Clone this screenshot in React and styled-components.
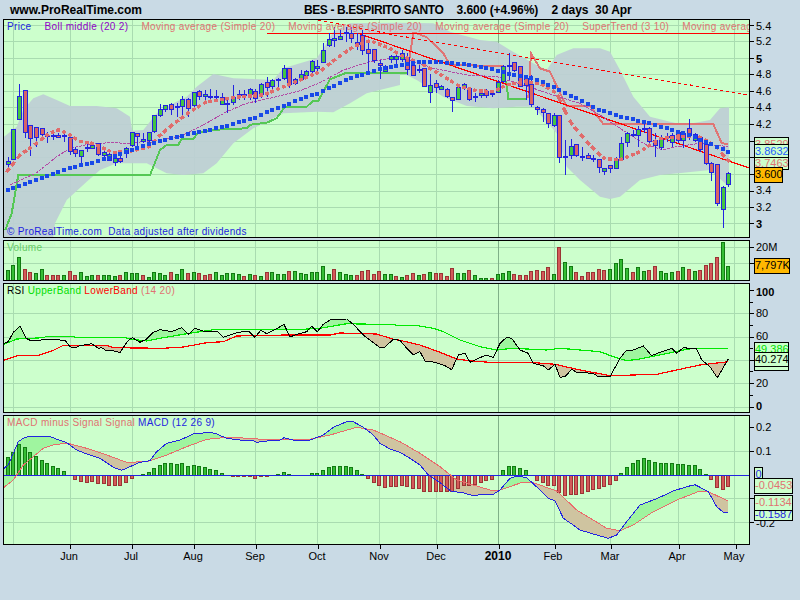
import React from 'react';
import styled, { createGlobalStyle } from 'styled-components';

const GlobalStyle = createGlobalStyle`
  html, body {
    margin: 0;
    padding: 0;
    background: #c9dae5;
  }
`;

const Page = styled.div`
  width: 800px;
  height: 600px;
  overflow: hidden;
  display: flex;
  flex-direction: column;
  gap: 2px;
  background: #c9dae5;
  font-family: 'Liberation Sans', Arial, sans-serif;
  color: #000;
`;
const TitleBar = styled.div`
  height: 17px;
  box-sizing: border-box;
  padding: 3px 0 0 10px;
  display: flex;
  align-items: center;
  font-size: 12px;
  font-weight: bold;
  white-space: pre;
`;
const SiteName = styled.span`
  width: 294px;
`;
const Security = styled.span`
  letter-spacing: -0.4px;
`;
const Quote = styled.span`
  letter-spacing: -0.05px;
`;
const Pane = styled.div`
  display: flex;
  height: ${({ $h }) => $h}px;
  margin-left: 3px;
`;
const ChartBox = styled.div`
  position: relative;
  width: 747px;
  height: 100%;
  box-sizing: border-box;
  border: 1px solid #000;
  background: #ccffcc;
  overflow: hidden;
  flex: none;
`;
const ChartSvg = styled.svg`
  display: block;
`;
const Legend = styled.div`
  position: absolute;
  top: 1px;
  left: 3px;
  display: flex;
  gap: ${({ $gap }) => $gap || 0}px;
  font-size: 10px;
  letter-spacing: 0.34px;
  line-height: 12px;
  white-space: pre;
`;
const LegendItem = styled.span`
  color: ${({ $c }) => $c};
`;
const Copyright = styled.div`
  position: absolute;
  left: 3px;
  bottom: -1px;
  color: #1c1ce0;
  font-size: 10px;
  letter-spacing: 0.31px;
  line-height: 13px;
  white-space: pre;
`;
const Axis = styled.div`
  position: relative;
  flex: 1;
`;
const AxisLabel = styled.span`
  position: absolute;
  left: 6px;
  transform: translateY(-50%);
  font-size: 11px;
  line-height: 12px;
  font-weight: ${({ $bold }) => ($bold ? 'bold' : 'normal')};
`;
const AxisTick = styled.i`
  position: absolute;
  left: 0;
  width: ${({ $minor }) => ($minor ? 3 : 4)}px;
  height: 1px;
  background: #000;
`;
const Tag = styled.div`
  position: absolute;
  left: 4px;
  width: ${({ $w }) => $w}px;
  height: ${({ $h }) => $h || 14}px;
  top: ${({ $top }) => $top}px;
  box-sizing: border-box;
  border: 1px solid #000;
  background: ${({ $bg }) => $bg || '#ccffcc'};
  color: ${({ $c }) => $c || '#000'};
  font-size: 11px;
  line-height: 13px;
  text-align: center;
  white-space: pre;
  overflow: hidden;
`;
const Months = styled.div`
  position: relative;
  height: 30px;
  margin-top: -2px;
`;
const MonthTick = styled.i`
  position: absolute;
  top: 0;
  width: 1px;
  height: 4px;
  background: #000;
`;
const MonthLabel = styled.span`
  position: absolute;
  top: 4px;
  transform: translateX(-50%);
  font-size: ${({ $bold }) => ($bold ? 12 : 11)}px;
  line-height: 14px;
  font-weight: ${({ $bold }) => ($bold ? 'bold' : 'normal')};
`;

// all chart data read off the 3x crops: half(pageX, pageY, [zoomX, zoomY, ...])
const half = (ox, oy, a) => {
  const out = [];
  for (let i = 0; i < a.length; i += 2) out.push([ox + a[i] / 3, oy + a[i + 1] / 3]);
  return out;
};
const toPoints = (p) => p.map(([x, y]) => `${x.toFixed(1)},${y.toFixed(1)}`).join(' ');

const interp = (pts, x) => {
  for (let i = 1; i < pts.length; i++) {
    if (x <= pts[i][0]) {
      const [x0, y0] = pts[i - 1];
      const [x1, y1] = pts[i];
      if (x1 === x0) return y1;
      return y0 + ((y1 - y0) * (x - x0)) / (x1 - x0);
    }
  }
  return pts[pts.length - 1][1];
};

// polygons of the stretches where line a lies above (sign -1) or below (sign 1) line b
const fillBetween = (a, b, sign) => {
  const from = Math.ceil(Math.max(a[0][0], b[0][0]));
  const to = Math.floor(Math.min(a[a.length - 1][0], b[b.length - 1][0]));
  const polys = [];
  let top = [];
  let bot = [];
  const flush = () => {
    if (top.length > 1) polys.push(toPoints([...top, ...bot.reverse()]));
    top = [];
    bot = [];
  };
  for (let x = from; x <= to; x++) {
    const ya = interp(a, x);
    const yb = interp(b, x);
    if ((ya - yb) * sign > 0) {
      top.push([x, ya]);
      bot.push([x, yb]);
    } else flush();
  }
  flush();
  return polys;
};

const vGrid = [13.5, 70.5, 132.5, 194.5, 255.5, 317.5, 379.5, 436.5, 554.5, 610.5, 678.5, 734.5];
const yearLine = 498.5;

const GREEN_FILL = '#9ff59f';
const BROWN_FILL = '#cfc4a0';
const GRID = '#a9dcb0';

/* price panel */
const priceGrid = [25, 41, 58, 74, 91, 107, 124, 141, 157, 174, 191, 207, 223];
const bandUpper = [
  ...half(0, 0, [12, 410, 50, 380, 70, 330, 100, 295, 130, 283, 170, 300, 210, 318, 290, 318, 350, 325, 390, 350, 397, 392, 430, 390, 470, 340, 520, 310, 560, 290, 590, 260, 640, 222, 700, 235, 760, 237, 820, 240, 850, 205, 950, 175, 980, 130, 1000, 95, 1050, 70, 1200, 68]),
  ...half(400, 0, [0, 68, 100, 70, 150, 95, 240, 120, 290, 125, 330, 150, 400, 190, 440, 210, 470, 165, 520, 145, 600, 145, 630, 155, 660, 210, 700, 290, 750, 350, 850, 375, 930, 360, 960, 325, 987, 322]),
];
const bandLower = [
  ...half(0, 0, [12, 712, 160, 712, 165, 670, 200, 600, 260, 545, 300, 510, 350, 490, 440, 490, 500, 520, 550, 525, 610, 520, 650, 490, 700, 430, 760, 385, 800, 365, 850, 340, 950, 335, 1000, 337, 1050, 310, 1100, 280, 1200, 255]),
  ...half(400, 0, [0, 215, 50, 240, 130, 290, 200, 318, 280, 325, 350, 320, 400, 320, 470, 400, 500, 500, 540, 540, 600, 590, 630, 597, 660, 590, 720, 540, 780, 525, 850, 518, 930, 510, 987, 560]),
];
const bollMiddle = [
  ...half(0, 0, [15, 572, 120, 535, 200, 507, 300, 482, 380, 455, 450, 432, 520, 412, 590, 398, 680, 378, 760, 355, 830, 325, 900, 298, 960, 278, 1040, 240, 1120, 212, 1200, 197]),
  ...half(400, 0, [60, 185, 130, 187, 200, 193, 260, 203, 320, 220, 400, 235, 470, 265, 540, 300, 600, 330, 660, 350, 730, 365, 800, 385, 870, 405, 930, 432, 985, 455]),
];
const maThick = [
  ...half(0, 0, [18, 518, 60, 465, 110, 430, 140, 405, 175, 388, 205, 402, 240, 425, 280, 430, 310, 445, 340, 458, 400, 452, 450, 440, 470, 415, 520, 372, 570, 335, 620, 305, 670, 298, 720, 290, 790, 285, 840, 265, 900, 240, 960, 215, 1010, 175, 1060, 140, 1110, 122, 1170, 145, 1200, 165]),
  ...half(400, 0, [50, 185, 90, 205, 140, 235, 180, 260, 230, 272, 280, 275, 320, 255, 370, 245, 420, 250, 470, 280, 510, 365, 560, 425, 610, 475, 660, 480, 720, 455, 780, 415, 850, 410, 900, 410, 950, 440, 985, 485]),
];
const maThin = [
  ...half(0, 0, [30, 555, 110, 518, 170, 470, 210, 445, 270, 432, 330, 428, 390, 430, 470, 420, 540, 410, 610, 375, 680, 335, 740, 310, 830, 290, 900, 272, 960, 248, 1030, 210, 1110, 185, 1200, 170]),
  ...half(400, 0, [100, 205, 200, 225, 290, 230, 400, 265, 490, 295, 540, 310, 600, 345, 660, 385, 730, 430, 790, 450, 830, 440, 900, 430, 985, 440]),
];
const trendUp = [
  ...half(0, 0, [16, 690, 35, 640, 55, 525, 450, 525, 480, 450, 500, 435, 535, 435, 545, 416, 580, 416, 595, 398, 630, 390, 740, 385, 750, 374, 800, 368, 830, 355, 855, 320, 920, 320, 940, 302, 955, 302, 990, 238, 1040, 218, 1200, 218]),
  ...half(400, 0, [20, 218]),
];
const trendUp2 = half(400, 0, [305, 200, 320, 255, 325, 296, 380, 296]);
const trendDown = half(400, 0, [27, 185, 40, 100, 50, 100, 80, 112, 130, 160, 150, 195, 310, 198]);
const trendDown2 = half(400, 0, [385, 295, 393, 160, 420, 205, 450, 215, 490, 300, 500, 318, 570, 318, 610, 372, 940, 372, 965, 430, 985, 432]);

// x, body top, body bottom, high, low, colour (zoomed coordinates)
const candlesLeft = [
  [24, 484, 492, 470, 500, 'g'], [39, 388, 478, 388, 480, 'g'], [57, 289, 358, 252, 360, 'g'], [75, 271, 397, 271, 415, 'r'],
  [90, 376, 415, 376, 467, 'r'], [108, 381, 412, 381, 440, 'r'], [126, 385, 404, 385, 415, 'r'], [141, 404, 406, 395, 428, 'g'],
  [158, 405, 408, 395, 420, 'g'], [174, 405, 412, 400, 415, 'r'], [192, 405, 407, 395, 425, 'g'], [210, 411, 452, 400, 465, 'r'],
  [225, 446, 458, 440, 470, 'r'], [243, 451, 470, 450, 490, 'g'], [261, 440, 444, 430, 455, 'g'], [276, 434, 442, 425, 445, 'g'],
  [294, 430, 464, 428, 468, 'r'], [312, 457, 467, 445, 480, 'g'], [327, 462, 480, 448, 482, 'g'], [345, 473, 484, 460, 497, 'g'],
  [360, 475, 484, 460, 490, 'r'], [378, 443, 458, 440, 475, 'g'], [396, 397, 436, 397, 440, 'g'], [411, 400, 410, 398, 440, 'r'],
  [429, 418, 423, 400, 430, 'g'], [447, 397, 422, 397, 440, 'g'], [462, 346, 394, 346, 400, 'g'], [480, 328, 346, 312, 352, 'g'],
  [495, 316, 328, 316, 335, 'g'], [513, 313, 328, 310, 345, 'r'], [531, 318, 320, 310, 350, 'g'], [546, 298, 319, 288, 350, 'g'],
  [564, 298, 325, 295, 350, 'r'], [582, 277, 316, 275, 325, 'g'], [597, 274, 288, 270, 300, 'r'], [615, 283, 289, 270, 300, 'g'],
  [630, 288, 291, 268, 310, 'g'], [648, 287, 289, 270, 300, 'g'], [666, 292, 314, 280, 315, 'g'], [681, 308, 312, 290, 340, 'g'],
  [699, 290, 305, 255, 315, 'g'], [717, 282, 285, 270, 300, 'g'], [732, 282, 285, 270, 300, 'g'], [750, 268, 284, 265, 300, 'g'],
  [765, 272, 293, 268, 310, 'r'], [783, 252, 283, 250, 295, 'g'], [801, 247, 262, 232, 290, 'r'], [816, 241, 260, 238, 270, 'g'],
  [834, 236, 240, 235, 265, 'g'], [852, 205, 235, 195, 240, 'g'], [867, 205, 252, 205, 265, 'r'], [885, 238, 250, 235, 255, 'g'],
  [903, 222, 236, 210, 240, 'g'], [918, 214, 226, 210, 235, 'g'], [936, 184, 215, 180, 225, 'g'], [951, 199, 205, 180, 215, 'g'],
  [969, 151, 188, 130, 190, 'g'], [987, 118, 136, 100, 140, 'g'], [1002, 115, 121, 80, 140, 'g'], [1020, 107, 116, 90, 120, 'g'],
  [1038, 96, 99, 80, 125, 'g'], [1053, 100, 114, 80, 130, 'r'], [1071, 125, 131, 100, 150, 'r'], [1086, 104, 150, 90, 165, 'r'],
  [1104, 148, 160, 130, 220, 'r'], [1122, 148, 180, 148, 190, 'r'], [1139, 190, 196, 180, 238, 'r'], [1156, 197, 213, 195, 215, 'g'],
  [1173, 168, 177, 165, 190, 'g'], [1188, 168, 178, 160, 200, 'g'],
];
const candlesRight = [
  [6, 160, 177, 150, 185, 'g'], [21, 170, 205, 160, 225, 'r'], [39, 195, 224, 185, 228, 'r'], [57, 208, 212, 195, 220, 'g'],
  [72, 205, 260, 205, 262, 'r'], [90, 255, 275, 222, 308, 'g'], [108, 250, 262, 240, 280, 'r'], [123, 258, 266, 255, 270, 'g'],
  [141, 268, 290, 265, 295, 'r'], [156, 292, 302, 290, 335, 'r'], [174, 262, 298, 258, 298, 'g'], [192, 253, 263, 250, 270, 'g'],
  [207, 265, 298, 262, 302, 'r'], [225, 288, 292, 280, 305, 'g'], [243, 280, 287, 270, 295, 'g'], [258, 272, 284, 268, 295, 'r'],
  [276, 278, 280, 270, 290, 'g'], [294, 246, 275, 240, 280, 'g'], [309, 198, 242, 195, 250, 'g'], [327, 195, 199, 158, 240, 'g'],
  [342, 187, 212, 185, 215, 'r'], [360, 198, 258, 198, 260, 'r'], [378, 235, 256, 225, 300, 'r'], [393, 253, 312, 225, 322, 'r'],
  [411, 322, 328, 318, 345, 'r'], [429, 328, 338, 325, 365, 'r'], [444, 338, 368, 338, 385, 'r'], [462, 345, 376, 340, 380, 'g'],
  [477, 345, 470, 345, 488, 'r'], [495, 468, 471, 420, 525, 'g'], [513, 438, 465, 418, 478, 'g'], [528, 433, 466, 433, 470, 'r'],
  [546, 467, 470, 440, 482, 'g'], [564, 465, 473, 460, 478, 'r'], [579, 475, 478, 465, 485, 'g'], [597, 477, 502, 477, 520, 'r'],
  [612, 505, 514, 505, 525, 'g'], [630, 496, 506, 495, 520, 'r'], [648, 478, 506, 470, 508, 'g'], [663, 428, 477, 410, 478, 'g'],
  [681, 400, 427, 395, 440, 'g'], [699, 403, 407, 390, 410, 'g'], [714, 388, 405, 378, 440, 'g'], [732, 383, 386, 365, 400, 'g'],
  [747, 384, 424, 382, 440, 'r'], [765, 420, 436, 400, 470, 'r'], [783, 417, 440, 405, 450, 'g'], [801, 408, 412, 400, 425, 'g'],
  [816, 405, 425, 400, 440, 'g'], [834, 396, 420, 395, 430, 'r'], [849, 398, 420, 395, 445, 'g'], [867, 385, 406, 356, 420, 'r'],
  [885, 402, 420, 400, 425, 'g'], [900, 410, 447, 408, 455, 'r'], [918, 432, 490, 430, 495, 'r'], [933, 488, 514, 485, 542, 'r'],
  [951, 493, 610, 493, 618, 'r'], [969, 562, 628, 558, 684, 'g'], [984, 520, 554, 515, 562, 'g'],
];
const candles = [
  ...candlesLeft,
  ...candlesRight.map(([x, ...rest]) => [x + 1200, ...rest]),
].map((c) => c.map((v) => (typeof v === 'number' ? v / 3 : v)));

/* volume panel: top of each bar, zoomed */
const volumeLeft = [
  [24, 105, 'g'], [39, 90, 'g'], [57, 67, 'g'], [75, 102, 'r'], [90, 112, 'r'], [108, 114, 'g'], [126, 102, 'g'], [141, 120, 'r'], [158, 120, 'r'], [174, 120, 'r'],
  [192, 120, 'g'], [210, 108, 'r'], [225, 120, 'r'], [243, 112, 'g'], [261, 123, 'g'], [276, 120, 'g'], [294, 120, 'r'], [312, 120, 'g'], [327, 120, 'g'], [345, 123, 'g'],
  [360, 120, 'r'], [378, 111, 'g'], [396, 114, 'g'], [411, 114, 'g'], [429, 120, 'r'], [447, 126, 'g'], [462, 111, 'g'], [480, 114, 'g'], [495, 120, 'g'], [513, 111, 'r'],
  [531, 117, 'g'], [546, 102, 'g'], [564, 114, 'r'], [582, 111, 'g'], [597, 114, 'r'], [615, 120, 'r'], [630, 117, 'r'], [648, 111, 'g'], [666, 120, 'g'], [681, 114, 'g'],
  [699, 114, 'g'], [717, 117, 'g'], [732, 123, 'r'], [750, 117, 'g'], [765, 120, 'r'], [783, 123, 'g'], [801, 111, 'r'], [816, 111, 'g'], [834, 117, 'g'], [852, 117, 'g'],
  [867, 108, 'r'], [885, 108, 'g'], [903, 114, 'g'], [918, 116, 'g'], [936, 111, 'g'], [951, 111, 'g'], [969, 93, 'g'], [987, 117, 'g'], [1002, 102, 'r'], [1020, 111, 'g'],
  [1038, 117, 'g'], [1053, 120, 'g'], [1071, 120, 'r'], [1086, 108, 'r'], [1104, 105, 'r'], [1122, 117, 'r'], [1137, 108, 'r'], [1155, 117, 'g'], [1173, 117, 'g'], [1188, 123, 'r'],
];
const volumeRight = [
  [6, 126, 'g'], [21, 120, 'r'], [39, 114, 'r'], [57, 120, 'g'], [72, 117, 'r'], [90, 111, 'g'], [108, 114, 'r'], [123, 114, 'r'], [141, 123, 'r'], [156, 99, 'r'],
  [174, 114, 'g'], [192, 114, 'g'], [207, 105, 'r'], [225, 120, 'g'], [243, 129, 'g'], [258, 129, 'g'], [276, 129, 'r'], [294, 117, 'g'], [309, 114, 'g'], [327, 108, 'g'],
  [342, 117, 'r'], [360, 120, 'r'], [378, 120, 'r'], [393, 108, 'r'], [411, 105, 'r'], [429, 108, 'r'], [444, 96, 'r'], [462, 117, 'g'], [477, 36, 'r'], [495, 81, 'g'],
  [513, 93, 'g'], [528, 111, 'r'], [546, 123, 'r'], [564, 111, 'r'], [579, 111, 'r'], [597, 102, 'r'], [612, 105, 'r'], [630, 102, 'g'], [648, 84, 'g'], [663, 72, 'g'],
  [681, 99, 'g'], [699, 111, 'r'], [714, 96, 'g'], [732, 108, 'g'], [747, 105, 'r'], [765, 93, 'r'], [783, 108, 'g'], [798, 114, 'g'], [816, 111, 'g'], [834, 108, 'r'],
  [849, 96, 'g'], [867, 102, 'r'], [885, 108, 'g'], [900, 105, 'r'], [918, 90, 'r'], [933, 84, 'r'], [951, 66, 'r'], [969, 21, 'g'], [984, 93, 'g'],
];

/* RSI panel */
const rsi = [
  ...half(0, 235, [12, 325, 25, 320, 40, 292, 60, 274, 78, 310, 90, 316, 118, 316, 135, 312, 195, 316, 210, 335, 225, 339, 240, 332, 275, 326, 295, 340, 305, 338, 320, 348, 340, 347, 360, 353, 375, 330, 385, 316, 397, 308, 420, 322, 440, 312, 460, 292, 480, 284, 515, 290, 545, 278, 565, 298, 585, 280, 610, 288, 650, 288, 670, 307, 710, 293, 745, 288, 765, 307, 782, 286, 800, 296, 825, 284, 852, 268, 870, 306, 890, 298, 920, 290, 935, 274, 952, 290, 970, 268, 990, 255, 1040, 252, 1060, 268, 1090, 300, 1110, 315, 1140, 338, 1155, 336, 1180, 313, 1200, 316]),
  ...half(400, 235, [20, 340, 40, 360, 60, 350, 75, 378, 105, 382, 135, 392, 155, 404, 175, 360, 195, 355, 210, 382, 235, 370, 260, 360, 280, 368, 300, 325, 320, 307, 335, 310, 360, 345, 385, 355, 400, 385, 430, 392, 445, 405, 465, 388, 480, 427, 495, 425, 515, 403, 530, 412, 580, 415, 595, 425, 630, 425, 660, 370, 680, 345, 700, 345, 730, 333, 755, 362, 785, 350, 815, 340, 830, 355, 850, 338, 890, 342, 905, 375, 930, 395, 952, 428, 985, 372]),
];
const rsiUpper = [
  ...half(0, 235, [12, 328, 50, 312, 130, 308, 140, 304, 220, 304, 225, 307, 370, 307, 390, 312, 440, 318, 490, 308, 560, 296, 640, 284, 890, 284, 960, 280, 1040, 266, 1180, 269, 1200, 272]),
  ...half(400, 235, [45, 271, 100, 280, 130, 290, 180, 315, 240, 335, 290, 345, 340, 340, 440, 345, 480, 340, 600, 350, 640, 365, 680, 377, 720, 372, 780, 360, 850, 345, 880, 340, 985, 340]),
];
const rsiLower = [
  ...half(0, 235, [12, 376, 55, 361, 115, 361, 160, 346, 190, 331, 320, 331, 340, 338, 490, 340, 550, 336, 620, 323, 670, 320, 710, 303, 860, 300, 990, 300, 1020, 294, 1130, 297, 1180, 313, 1200, 316]),
  ...half(400, 235, [60, 330, 120, 352, 170, 372, 215, 378, 270, 382, 390, 382, 465, 388, 530, 403, 630, 422, 770, 418, 830, 405, 900, 390, 985, 380]),
];

/* MACD panel */
const macd = [
  ...half(0, 410, [12, 175, 25, 165, 40, 130, 55, 95, 70, 85, 85, 80, 150, 80, 200, 98, 230, 120, 260, 132, 300, 145, 340, 172, 365, 181, 390, 170, 420, 157, 450, 152, 470, 125, 500, 100, 540, 90, 580, 72, 630, 67, 650, 72, 680, 85, 720, 90, 760, 92, 770, 97, 800, 93, 840, 90, 852, 83, 880, 90, 930, 90, 970, 75, 1000, 52, 1040, 35, 1060, 35, 1090, 52, 1120, 75, 1140, 100, 1170, 117, 1200, 127]),
  ...half(400, 410, [30, 145, 60, 165, 85, 195, 120, 218, 155, 245, 185, 247, 215, 256, 280, 253, 300, 240, 330, 205, 350, 198, 380, 203, 420, 240, 445, 265, 465, 272, 490, 325, 520, 345, 540, 360, 600, 378, 625, 385, 650, 375, 680, 335, 720, 285, 770, 266, 820, 243, 860, 230, 885, 224, 925, 245, 950, 290, 970, 307, 985, 307]),
];
const signal = [
  ...half(0, 410, [12, 232, 40, 210, 70, 165, 100, 140, 130, 115, 160, 105, 200, 99, 260, 115, 320, 135, 380, 157, 440, 155, 500, 135, 560, 110, 620, 88, 680, 82, 750, 85, 810, 90, 930, 88, 990, 75, 1070, 52, 1120, 60, 1200, 95]),
  ...half(400, 410, [60, 130, 120, 170, 170, 210, 270, 240, 300, 240, 370, 216, 400, 218, 470, 243, 530, 300, 620, 355, 660, 362, 700, 345, 760, 305, 830, 270, 900, 243, 925, 245, 985, 273]),
];
const histLeft = [
  24, 140, 39, 125, 57, 103, 75, 112, 90, 127, 108, 138, 126, 151, 141, 160, 158, 169, 174, 175, 192, 184, 225, 206, 243, 212, 261, 215, 276, 212, 294, 218, 312, 218, 327, 224, 345, 224, 360, 224, 378, 215, 396, 203, 429, 193, 447, 187, 462, 175, 480, 166, 495, 160, 513, 160, 531, 163, 546, 160, 564, 169, 582, 166, 597, 169, 615, 172, 630, 178, 648, 181, 666, 190, 699, 199, 714, 199, 732, 199, 750, 199, 765, 203, 783, 199, 801, 199, 834, 193, 852, 187, 867, 193, 936, 190, 951, 190, 969, 181, 987, 172, 1002, 169, 1020, 169, 1038, 169, 1053, 172, 1071, 181, 1086, 193, 1104, 203, 1122, 215, 1137, 224, 1155, 230, 1173, 227, 1188, 227,
];
const histRight = [
  6, 224, 21, 227, 39, 233, 57, 233, 72, 242, 90, 242, 108, 242, 123, 242, 141, 242, 156, 242, 174, 233, 192, 224, 207, 224, 225, 221, 243, 215, 258, 209, 276, 206, 309, 181, 327, 169, 342, 169, 360, 175, 378, 181, 411, 209, 429, 215, 444, 224, 462, 224, 477, 245, 495, 254, 513, 251, 528, 251, 546, 248, 564, 242, 579, 236, 597, 233, 612, 227, 630, 221, 648, 209, 663, 190, 681, 172, 699, 160, 714, 151, 732, 145, 747, 151, 765, 157, 783, 160, 798, 160, 816, 160, 834, 163, 849, 163, 867, 166, 885, 166, 900, 178, 918, 193, 933, 206, 951, 230, 969, 236, 984, 227,
];
const histogram = [...half(0, 410, histLeft), ...half(400, 410, histRight)];

const months = [
  ['Jun', 69.5, 69], ['Jul', 131.5, 131], ['Aug', 193.5, 193], ['Sep', 255.5, 255], ['Oct', 317.5, 317], ['Nov', 379.5, 379],
  ['Dec', 436.5, 436], ['2010', 498.5, 498, true], ['Feb', 554.5, 553], ['Mar', 610.5, 610], ['Apr', 678.5, 677], ['May', 735.5, 734],
];

const Line = ({ pts, c, w = 1, dash }) => (
  <polyline
    points={toPoints(pts)}
    fill="none"
    stroke={c}
    strokeWidth={w}
    strokeDasharray={dash}
    shapeRendering="crispEdges"
  />
);

const Grid = ({ x, w, y, h, rows }) => (
  <g stroke={GRID} strokeWidth="1" shapeRendering="crispEdges">
    {rows.map((r) => <line key={r} x1={x} x2={x + w} y1={r + 0.5} y2={r + 0.5} />)}
    {vGrid.map((g) => <line key={g} x1={g} x2={g} y1={y} y2={y + h} />)}
    <line x1={yearLine} x2={yearLine} y1={y} y2={y + h} stroke="#7fb088" />
  </g>
);

const Fills = ({ line, above, below }) => (
  <g shapeRendering="crispEdges">
    {fillBetween(line, above, -1).map((p) => <polygon key={p} points={p} fill={GREEN_FILL} />)}
    {fillBetween(line, below, 1).map((p) => <polygon key={p} points={p} fill={BROWN_FILL} />)}
  </g>
);

// moving averages are plotted one mark per bar, as in the original chart
const inRange = (pts, x) => x >= pts[0][0] && x <= pts[pts.length - 1][0];

const PriceChart = () => (
  <ChartSvg width="745" height="217" viewBox="4 20 745 217">
    <Grid x={4} w={745} y={20} h={217} rows={priceGrid} />
    <polygon points={toPoints([...bandUpper, ...[...bandLower].reverse()])} fill="#bdcfd4" fillOpacity="0.93" />
    <Line pts={trendUp} c="#55c855" w={2} />
    <Line pts={trendUp2} c="#55c855" w={2} />
    <Line pts={trendDown} c="#e07575" w={2} />
    <Line pts={trendDown2} c="#e07575" w={2} />
    <Line pts={[[267, 33.5], [749, 33.5]]} c="#ff0000" />
    <Line pts={[[360, 34], [749, 168]]} c="#ff0000" w={1.2} />
    <Line pts={[[318, 20], [400, 36], [749, 95]]} c="#ff0000" dash="3 3" w={1.2} />
    <Line pts={maThin} c="#b24aa6" dash="3 1" />
    <g shapeRendering="crispEdges">
      {candles.map(([x, top, bot, hi, lo, col]) => (
        <g key={x} stroke="#2323e0">
          <line x1={Math.round(x) + 0.5} x2={Math.round(x) + 0.5} y1={hi} y2={lo} />
          <rect
            x={Math.round(x) - 1.5}
            y={Math.round(top) + 0.5}
            width="4"
            height={Math.max(1, Math.round(bot - top))}
            fill={col === 'g' ? '#44c444' : '#d96464'}
          />
        </g>
      ))}
    </g>
    <g stroke="#e06c6c" strokeWidth="3.4" shapeRendering="crispEdges">
      {candles.filter(([x]) => inRange(maThick, x)).map(([x]) => (
        <line key={x} x1={x - 1.7} x2={x + 1.7} y1={interp(maThick, x - 1.7)} y2={interp(maThick, x + 1.7)} />
      ))}
    </g>
    <g fill="#1848e8" shapeRendering="crispEdges">
      {candles.filter(([x]) => inRange(bollMiddle, x)).map(([x]) => (
        <rect key={x} x={Math.round(x) - 2} y={Math.round(interp(bollMiddle, x)) - 2} width="4" height="4" />
      ))}
    </g>
  </ChartSvg>
);

const VolumeChart = () => {
  const bars = [...volumeLeft.map(([x, t, c]) => [x / 3, t / 3, c]), ...volumeRight.map(([x, t, c]) => [400 + x / 3, t / 3, c])];
  return (
    <ChartSvg width="745" height="39" viewBox="4 241 745 39">
      <Grid x={4} w={745} y={241} h={39} rows={[247, 263]} />
      <g shapeRendering="crispEdges" strokeWidth="1">
        {bars.map(([x, t, c]) => (
          <rect
            key={x}
            x={Math.round(x) - 1.5}
            y={Math.round(235 + t) + 0.5}
            width="3"
            height={280 - Math.round(235 + t)}
            fill={c === 'g' ? '#35bd35' : '#d45a5a'}
            stroke={c === 'g' ? '#117a11' : '#9a3434'}
          />
        ))}
      </g>
    </ChartSvg>
  );
};

const RsiChart = () => (
  <ChartSvg width="745" height="128" viewBox="4 284 745 128">
    <Grid x={4} w={745} y={284} h={128} rows={[313, 337, 360, 383, 407]} />
    <Fills line={rsi} above={rsiUpper} below={rsiLower} />
    <Line pts={rsiUpper} c="#00e800" w={1.2} />
    <Line pts={rsiLower} c="#ff0000" w={1.2} />
    <Line pts={rsi} c="#000" />
  </ChartSvg>
);

const MacdChart = () => (
  <ChartSvg width="745" height="128" viewBox="4 416 745 128">
    <Grid x={4} w={745} y={416} h={128} rows={[451, 498, 522]} />
    <Fills line={macd} above={signal} below={signal} />
    <g shapeRendering="crispEdges">
      {histogram.map(([x, y]) => {
        const top = Math.min(y, 475);
        const h = Math.abs(y - 475);
        const up = y < 475;
        return (
          <rect
            key={x}
            x={Math.round(x) - 1.5}
            y={Math.round(top) + 0.5}
            width="3"
            height={Math.round(h)}
            fill={up ? '#35bd35' : '#d45a5a'}
            stroke={up ? '#117a11' : '#9a3434'}
          />
        );
      })}
    </g>
    <Line pts={[[4, 475.5], [749, 475.5]]} c="#2323e0" />
    <Line pts={signal} c="#e96c6c" />
    <Line pts={macd} c="#2323e0" />
  </ChartSvg>
);

const Scale = ({ top, ticks = [], minor = [], labels = [], children }) => (
  <Axis>
    {ticks.map((y) => <AxisTick key={y} style={{ top: y - top }} />)}
    {minor.map((y) => <AxisTick key={y} $minor style={{ top: y - top }} />)}
    {labels.map(([text, y, bold]) => (
      <AxisLabel key={text} $bold={bold} style={{ top: y - top }}>{text}</AxisLabel>
    ))}
    {children}
  </Axis>
);

export default function App() {
  return (
    <Page>
      <GlobalStyle />
      <TitleBar>
        <SiteName>www.ProRealTime.com</SiteName>
        <Security>BES - B.ESPIRITO SANTO</Security>
        <Quote>    3.600 (+4.96%)    2 days  30 Apr</Quote>
      </TitleBar>

      <Pane $h={219}>
        <ChartBox>
          <PriceChart />
          <Legend $gap={13}>
            <LegendItem $c="#2323e0">Price</LegendItem>
            <LegendItem $c="#9000c8">Boll middle (20 2)</LegendItem>
            <LegendItem $c="#e07272">Moving average (Simple 20)</LegendItem>
            <LegendItem $c="#e07272">Moving average (Simple 20)</LegendItem>
            <LegendItem $c="#e07272">Moving average (Simple 20)</LegendItem>
            <LegendItem $c="#e07272">SuperTrend (3 10)</LegendItem>
            <LegendItem $c="#e07272">Moving average</LegendItem>
          </Legend>
          <Copyright>© ProRealTime.com  Data adjusted after dividends</Copyright>
        </ChartBox>
        <Scale
          top={19}
          ticks={priceGrid}
          labels={[['5.4', 26], ['5.2', 41], ['5', 59, true], ['4.8', 74], ['4.6', 91], ['4.4', 107], ['4.2', 124], ['3.4', 190], ['3.2', 207], ['3', 224, true]]}
        >
          <Tag $top={118} $w={35} $c="#e07272">3.8529</Tag>
          <Tag $top={137} $w={35} $c="#e07272">3.7463</Tag>
          <Tag $top={125} $w={35} $c="#1c5cff">3.8632</Tag>
          <Tag $top={148} $w={29} $h={16} $bg="#ffb800">3.600</Tag>
        </Scale>
      </Pane>

      <Pane $h={41}>
        <ChartBox>
          <VolumeChart />
          <Legend>
            <LegendItem $c="#66cc66">Volume</LegendItem>
          </Legend>
        </ChartBox>
        <Scale top={240} ticks={[247, 263]} labels={[['20M', 247]]}>
          <Tag $top={18} $w={36} $h={16} $bg="#ffb800">7,797K</Tag>
        </Scale>
      </Pane>

      <Pane $h={130}>
        <ChartBox>
          <RsiChart />
          <Legend $gap={3}>
            <LegendItem $c="#000">RSI</LegendItem>
            <LegendItem $c="#00dd00">UpperBand</LegendItem>
            <LegendItem $c="#ff0000">LowerBand</LegendItem>
            <LegendItem $c="#e07272">(14 20)</LegendItem>
          </Legend>
        </ChartBox>
        <Scale
          top={283}
          ticks={[290, 313, 337, 360, 383, 407]}
          minor={[302, 325, 348, 371, 395]}
          labels={[['100', 292, true], ['80', 313], ['60', 336], ['40', 360], ['20', 383], ['0', 406, true]]}
        >
          <Tag $top={59} $w={35} $c="#00dd00">49.386</Tag>
          <Tag $top={72} $w={35} $h={16}> </Tag>
          <Tag $top={69} $w={35} $h={15}>40.274</Tag>
        </Scale>
      </Pane>

      <Pane $h={130}>
        <ChartBox>
          <MacdChart />
          <Legend $gap={3}>
            <LegendItem $c="#e07272">MACD minus Signal</LegendItem>
            <LegendItem $c="#e07272">Signal</LegendItem>
            <LegendItem $c="#2323e0">MACD</LegendItem>
            <LegendItem $c="#2323e0">(12 26 9)</LegendItem>
          </Legend>
        </ChartBox>
        <Scale
          top={415}
          ticks={[427, 451, 498, 522]}
          labels={[['0.2', 427], ['0.1', 451], ['-0.2', 523]]}
        >
          <Tag $top={52} $w={9} $h={12} $c="#2323e0">0</Tag>
          <Tag $top={63} $w={39} $h={16} $c="#e07272">-0.0453</Tag>
          <Tag $top={92} $w={39} $h={14} $c="#2323e0">-0.1587</Tag>
          <Tag $top={80} $w={39} $h={16} $c="#e07272">-0.1134</Tag>
        </Scale>
      </Pane>

      <Months>
        {months.map(([text, tick, at, bold]) => (
          <React.Fragment key={text}>
            <MonthTick style={{ left: tick }} />
            <MonthLabel $bold={bold} style={{ left: at }}>{text}</MonthLabel>
          </React.Fragment>
        ))}
      </Months>
    </Page>
  );
}
